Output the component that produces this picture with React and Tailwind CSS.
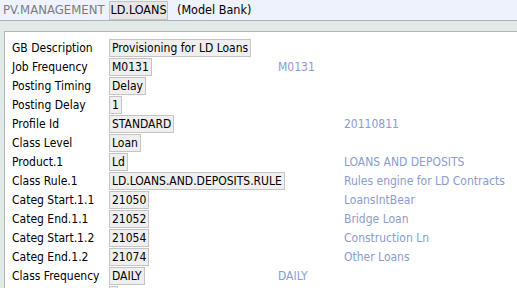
import React from "react";

const rows = [
  { label: "GB Description", value: "Provisioning for LD Loans" },
  { label: "Job Frequency", value: "M0131", note: "M0131", wide: false },
  { label: "Posting Timing", value: "Delay" },
  { label: "Posting Delay", value: "1" },
  { label: "Profile Id", value: "STANDARD", note: "20110811", wide: true },
  { label: "Class Level", value: "Loan" },
  { label: "Product.1", value: "Ld", note: "LOANS AND DEPOSITS", wide: true },
  { label: "Class Rule.1", value: "LD.LOANS.AND.DEPOSITS.RULE", note: "Rules engine for LD Contracts", wide: true },
  { label: "Categ Start.1.1", value: "21050", note: "LoansIntBear", wide: true },
  { label: "Categ End.1.1", value: "21052", note: "Bridge Loan", wide: true },
  { label: "Categ Start.1.2", value: "21054", note: "Construction Ln", wide: true },
  { label: "Categ End.1.2", value: "21074", note: "Other Loans", wide: true },
  { label: "Class Frequency", value: "DAILY", note: "DAILY", wide: false },
  { label: "", value: "\u00a0" },
];

const Field = ({ children }) => (
  <span className="inline-flex h-[18px] items-center border border-[#c4c4c4] bg-[#efefef] px-[2px] leading-none whitespace-nowrap">
    {children}
  </span>
);

export default function App() {
  return (
    <div
      className="w-[517px] h-[288px] overflow-hidden bg-[#e2eae7] text-[12px] text-black"
      style={{ fontFamily: '"DejaVu Sans Condensed", "DejaVu Sans", sans-serif' }}
    >
      <div className="flex h-[21px] items-center border-b border-[#b4b4b4] bg-[#eef2fd] pl-[3px] text-[13px]">
        <span className="w-[106px] shrink-0 whitespace-nowrap text-[#7c7c7c]">PV.MANAGEMENT</span>
        <span className="flex h-[19px] w-[59px] shrink-0 items-center justify-center border border-[#c4c4c4] bg-[#e6e6e6] text-[12.5px]">
          LD.LOANS
        </span>
        <span className="ml-[9px] whitespace-nowrap text-[12.5px]">(Model Bank)</span>
      </div>
      <div className="ml-[4px] mt-[10px] h-full border-l border-t border-[#b4b4b4] bg-white pl-[7px] pt-[6px]">
        {rows.map((r, i) => (
          <div key={i} className="flex h-[19px] items-center">
            <span className="w-[97px] shrink-0 whitespace-nowrap">{r.label}</span>
            <span className={r.note ? (r.wide ? "w-[235px] shrink-0" : "w-[169px] shrink-0") : ""}>
              <Field>{r.value}</Field>
            </span>
            {r.note && <span className="whitespace-nowrap text-[#8a9bcf]">{r.note}</span>}
          </div>
        ))}
      </div>
    </div>
  );
}
